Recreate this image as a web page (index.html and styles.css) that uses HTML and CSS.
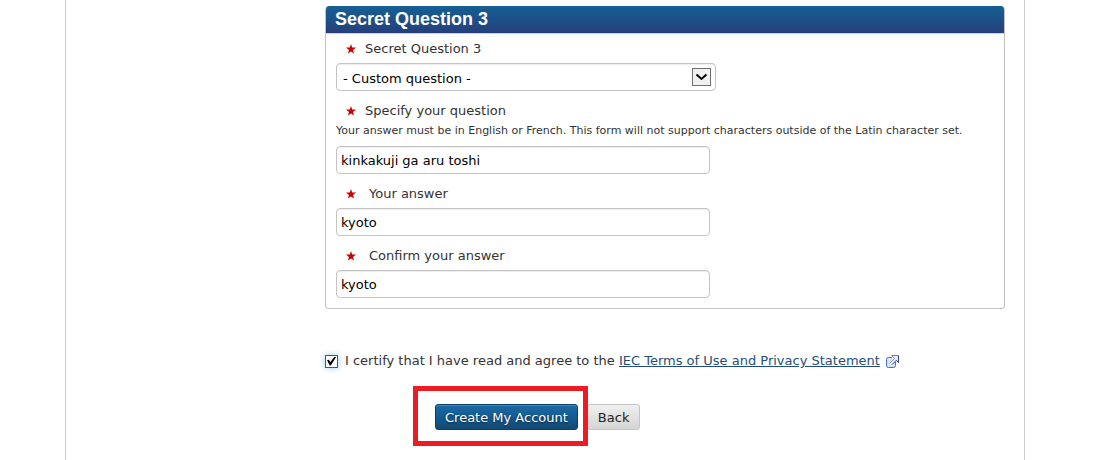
FILE: index.html
```html
<!DOCTYPE html>
<html lang="en">

<head>
    <meta charset="utf-8">
    <title>Create My Account</title>
    <link rel="stylesheet" href="styles.css">
</head>

<body>
    <main class="page">
        <form class="account-form">
            <section class="panel">
                <h2>Secret Question 3</h2>
                <div class="panel-body">
                    <div class="form-group">
                        <label for="secret_question">
                            <svg class="star" viewBox="0 0 10 10"><path d="M5 0L6.2 3.6H10L7 5.9L8.1 9.6L5 7.4L1.9 9.6L3 5.9L0 3.6H3.8Z"/></svg>
                            Secret Question 3
                        </label>
                        <div class="select-box">
                            <select id="secret_question" name="secret_question">
                                <option>- Custom question -</option>
                            </select>
                            <svg class="arrow" viewBox="0 0 19 18">
                                <rect x="0.5" y="0.5" width="18" height="17" fill="#f0f0f0" stroke="#707070"/>
                                <path d="M4.5 6.5L9.5 11L14.5 6.5" fill="none" stroke="#000" stroke-width="2"/>
                            </svg>
                        </div>
                    </div>

                    <div class="form-group">
                        <label for="question">
                            <svg class="star" viewBox="0 0 10 10"><path d="M5 0L6.2 3.6H10L7 5.9L8.1 9.6L5 7.4L1.9 9.6L3 5.9L0 3.6H3.8Z"/></svg>
                            Specify your question
                        </label>
                        <p class="help">Your answer must be in English or French. This form will not support characters outside of the Latin character set.</p>
                        <input type="text" id="question" name="question" value="kinkakuji ga aru toshi">
                    </div>

                    <div class="form-group">
                        <label class="wide" for="answer">
                            <svg class="star" viewBox="0 0 10 10"><path d="M5 0L6.2 3.6H10L7 5.9L8.1 9.6L5 7.4L1.9 9.6L3 5.9L0 3.6H3.8Z"/></svg>
                            Your answer
                        </label>
                        <input type="text" id="answer" name="answer" value="kyoto">
                    </div>

                    <div class="form-group">
                        <label class="wide" for="confirm_answer">
                            <svg class="star" viewBox="0 0 10 10"><path d="M5 0L6.2 3.6H10L7 5.9L8.1 9.6L5 7.4L1.9 9.6L3 5.9L0 3.6H3.8Z"/></svg>
                            Confirm your answer
                        </label>
                        <input type="text" id="confirm_answer" name="confirm_answer" value="kyoto">
                    </div>
                </div>
            </section>

            <div class="certify">
                <input type="checkbox" id="certify" name="certify" checked>
                <label for="certify">I certify that I have read and agree to the <a href="#terms">IEC Terms of Use and Privacy Statement</a></label>
                <svg class="external" viewBox="0 0 13 13">
                    <path d="M6 2.5H2.5Q0.5 2.5 0.5 4.5V10.5Q0.5 12.5 2.5 12.5H7.5Q9.5 12.5 9.5 10.5V7" fill="#dfe5f8" stroke="#4a66d0"/>
                    <path d="M5.5 0.5H12.5V7.5L10.3 5.3L5 10.6L2.9 8.5L8.2 3.2Z" fill="#e8edfc"/>
                    <path d="M5.5 0.5H12.5" stroke="#5b7be6"/>
                    <path d="M3.5 8.5L8.5 3.5L6 1" fill="none" stroke="#8496dc"/>
                    <path d="M12.5 0.5V7.5L10.3 5.3L6 9.6" fill="none" stroke="#2c409c"/>
                </svg>
            </div>

            <div class="actions">
                <div class="highlight">
                    <button type="submit" class="btn btn-primary">Create My Account</button>
                </div>
                <button type="button" class="btn">Back</button>
            </div>
        </form>
    </main>
</body>

</html>
```
FILE: styles.css
```css
body {
    margin: 0;
    padding: 0 71px 0 65px;
    background-color: white;
    color: #333;
    font-family: Verdana, "DejaVu Sans", sans-serif;
    font-size: 13px;
    line-height: 20px;
}

.page {
    box-sizing: border-box;
    max-width: 960px;
    min-height: 100vh;
    padding: 6px 19px 14px 259px;
    border: solid #ccc;
    border-width: 0 1px;
}

.panel {
    border: 1px solid #c4c4c4;
    border-top: none;
    border-radius: 4px;
    overflow: hidden;
}

h2 {
    margin: 0;
    padding: 0 9px;
    border-bottom: 1px solid #ccd;
    background: linear-gradient(#156094, #263f7b);
    color: white;
    font-family: Arial, "Liberation Sans", sans-serif;
    font-size: 18px;
    line-height: 27px;
}

.panel-body {
    padding: 5px 10px 10px;
}

.form-group + .form-group {
    margin-top: 10px;
}

.form-group label {
    display: flex;
    align-items: center;
    gap: 9px;
    margin-bottom: 4px;
    padding-left: 10px;
}

.form-group .wide {
    gap: 13px;
}

.star {
    width: 10px;
    height: 10px;
    fill: #c00;
}

.help {
    margin: -4px 0 5px;
    font-size: 11px;
}

input[type="text"],
select {
    display: block;
    box-sizing: border-box;
    width: 100%;
    max-width: 374px;
    height: 28px;
    padding: 0 4px;
    border: 1px solid #c4c4c4;
    border-radius: 4px;
    background-color: white;
    box-shadow: inset 0 1px 1px rgba(0, 0, 0, 0.075);
    color: black;
    font: inherit;
}

.select-box {
    position: relative;
    max-width: 380px;
}

select {
    max-width: none;
    padding: 3px 6px 0;
    appearance: none;
}

.arrow {
    position: absolute;
    top: 5px;
    right: 5px;
    width: 19px;
    height: 18px;
    pointer-events: none;
}

.certify {
    display: flex;
    align-items: center;
    margin-top: 42px;
}

input[type="checkbox"] {
    display: grid;
    place-items: center;
    width: 13px;
    height: 13px;
    margin: 0 7px 0 0;
    border: 1px solid #555;
    background-color: white;
    box-shadow: 0 0 6px #9ccdf0;
    appearance: none;
}

input[type="checkbox"]:checked::before {
    content: "";
    width: 9px;
    height: 9px;
    background-color: black;
    clip-path: polygon(0 40%, 20% 35%, 38% 60%, 85% 0, 100% 8%, 42% 100%, 30% 100%);
}

a {
    color: #1f4e79;
}

.external {
    width: 13px;
    height: 13px;
    margin-left: 6px;
}

.actions {
    display: flex;
    gap: 9px;
    margin-top: 33px;
    padding-left: 110px;
}

.highlight {
    position: relative;
}

.highlight::after {
    content: "";
    position: absolute;
    inset: -18px -10px -16px -22px;
    border: 5px solid #ed1c24;
    pointer-events: none;
}

.btn {
    box-sizing: border-box;
    height: 26px;
    padding: 1px 10px 0;
    border: 1px solid #c4c4c4;
    border-radius: 3px;
    background: linear-gradient(#f0f0f0, #d4d4d4);
    color: #222;
    font: inherit;
    cursor: pointer;
}

.btn-primary {
    padding: 1px 9px 0;
    border-color: #0d3f66;
    background: linear-gradient(#1a6ba8, #124a75);
    box-shadow: inset 0 1px 0 rgba(255, 255, 255, 0.2);
    color: white;
    text-shadow: 0 1px 2px rgba(0, 0, 0, 0.6);
}
```
